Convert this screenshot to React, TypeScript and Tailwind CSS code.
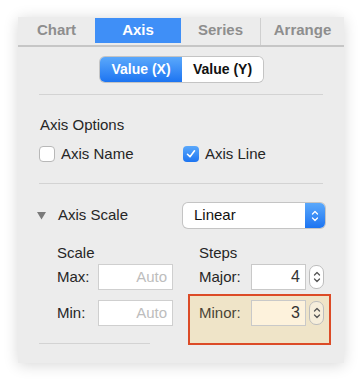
const font = { fontFamily: '"Liberation Sans", Arial, sans-serif' };

const tabs = [
  { label: "Chart", w: "w-[77px]" },
  { label: "Axis", w: "w-[86px]", active: true },
  { label: "Series", w: "w-[79px]" },
  { label: "Arrange", w: "w-[84px]", divider: true },
];

const Chevrons = ({ color }: { color: string }) => (
  <svg width="8" height="14" viewBox="0 0 8 14" fill="none">
    <path d="M1.5 5 L4 2.5 L6.5 5" stroke={color} strokeWidth="1.3" strokeLinecap="round" strokeLinejoin="round" />
    <path d="M1.5 9 L4 11.5 L6.5 9" stroke={color} strokeWidth="1.3" strokeLinecap="round" strokeLinejoin="round" />
  </svg>
);

const Stepper = ({ tint }: { tint?: boolean }) => (
  <div
    className={`ml-[3px] flex h-[24px] w-[15px] items-center justify-center rounded-[7px] border border-[#bdbdbd] ${
      tint ? "bg-[#f6eedb]" : "bg-white"
    }`}
  >
    <Chevrons color="#555" />
  </div>
);

const NumField = ({ value, tint }: { value: string; tint?: boolean }) => (
  <div
    className={`flex h-[26px] w-[55px] items-center justify-end border border-[#c9c9c9] pr-[5px] text-[16px] text-[#333] ${
      tint ? "bg-[#fdf2dc]" : "bg-white"
    }`}
  >
    {value}
  </div>
);

const AutoField = () => (
  <div className="flex h-[26px] w-[75px] items-center justify-end border border-[#cfcfcf] bg-white pr-[5px] text-[15px] text-[#bdbdbd]">
    Auto
  </div>
);

export default function App() {
  return (
    <div className="h-[381px] w-[362px] bg-white pl-[18px] pt-[17px]" style={font}>
      <div className="flex h-[346px] w-[326px] flex-col bg-[#ececec] pt-px shadow-[0_2px_14px_rgba(0,0,0,0.16)]">
        {/* TABS */}
        <div className="flex h-[29px] border-b-2 border-[#c6c6c6]">
          {tabs.map((t) => (
            <div key={t.label} className={`${t.w} flex h-full flex-col`}>
              <div
                className={`flex h-[25px] items-center justify-center text-[15px] font-bold ${
                  t.active ? "bg-[#3f8ff7] text-white" : "text-[#8e8e8e]"
                } ${t.divider ? "border-l border-[#cfcfcf]" : ""}`}
              >
                {t.label}
              </div>
              <div className={`flex-1 ${t.divider ? "border-l border-[#cfcfcf]" : ""}`} />
            </div>
          ))}
        </div>

        {/* SEGMENTED */}
        <div className="mt-[10px] flex justify-center pl-[1px]">
          <div className="flex h-[25px] w-[163px] overflow-hidden rounded-[5px] text-[14px] font-bold shadow-[0_0_0_1px_#c4c4c4]">
            <div className="flex w-[82px] items-center justify-center bg-gradient-to-b from-[#5aa8fb] to-[#1c74f1] text-white">
              Value (X)
            </div>
            <div className="flex flex-1 items-center justify-center bg-white text-[#111]">Value (Y)</div>
          </div>
        </div>

        <div className="mx-[21px] mt-[12px] h-px bg-[#d3d3d3]" />

        {/* AXIS OPTIONS */}
        <div className="ml-[22px] mt-[20px] flex h-[20px] items-center text-[15px] font-medium text-[#262626]">
          Axis Options
        </div>
        <div className="ml-[21px] mt-[10px] flex h-[18px] items-center text-[15px] text-[#262626]">
          <div className="flex w-[144px] items-center">
            <div className="h-[16px] w-[16px] rounded-[4px] border border-[#b8b8b8] bg-white" />
            <span className="ml-[6px]">Axis Name</span>
          </div>
          <div className="flex items-center">
            <div className="flex h-[16px] w-[16px] items-center justify-center rounded-[4px] bg-gradient-to-b from-[#5aa8fb] to-[#1c74f1]">
              <svg width="10" height="10" viewBox="0 0 10 10" fill="none">
                <path d="M1.5 5.3 L4 7.8 L8.5 1.8" stroke="white" strokeWidth="1.6" strokeLinecap="round" strokeLinejoin="round" />
              </svg>
            </div>
            <span className="ml-[6px]">Axis Line</span>
          </div>
        </div>

        <div className="mx-[21px] mt-[20px] h-px bg-[#d3d3d3]" />

        {/* AXIS SCALE */}
        <div className="mt-[19px] flex h-[25px] items-center pl-[19px] text-[15px] text-[#262626]">
          <svg width="9" height="8" viewBox="0 0 9 8">
            <path d="M0 0 L9 0 L4.5 7.5 Z" fill="#7a7a7a" />
          </svg>
          <span className="ml-[12px] w-[125px] font-medium">Axis Scale</span>
          <div className="flex h-[25px] w-[142px] overflow-hidden rounded-[5px] bg-white shadow-[0_0_0_1px_#c4c4c4]">
            <div className="flex flex-1 items-center pl-[11px] text-[15px] text-[#111]">Linear</div>
            <div className="flex w-[20px] items-center justify-center bg-gradient-to-b from-[#5aa8fb] to-[#1c74f1]">
              <Chevrons color="white" />
            </div>
          </div>
        </div>

        {/* SCALE / STEPS */}
        <div className="mt-[16px] flex pl-[39px] text-[15px] text-[#262626]">
          <div className="flex w-[142px] flex-col">
            <div className="flex h-[18px] items-center font-medium">Scale</div>
            <div className="mt-[2px] flex h-[26px] items-center">
              <span className="w-[41px]">Max:</span>
              <AutoField />
            </div>
            <div className="mt-[10px] flex h-[26px] items-center">
              <span className="w-[41px]">Min:</span>
              <AutoField />
            </div>
          </div>
          <div className="flex flex-col">
            <div className="flex h-[18px] items-center font-medium">Steps</div>
            <div className="mt-[2px] flex h-[26px] items-center">
              <span className="w-[52px]">Major:</span>
              <NumField value="4" />
              <Stepper />
            </div>
            <div className="relative mt-[10px] flex h-[26px] items-center">
              <div className="absolute left-[-11px] top-[-6px] h-[51px] w-[143px] border-2 border-[#dc4b27] bg-[#efe4c8]" />
              <span className="relative w-[52px] text-[#4a4436]">Minor:</span>
              <div className="relative flex items-center">
                <NumField value="3" tint />
                <Stepper tint />
              </div>
            </div>
          </div>
        </div>

        <div className="ml-[21px] mt-[17px] h-px w-[111px] bg-[#d3d3d3]" />
      </div>
    </div>
  );
}
